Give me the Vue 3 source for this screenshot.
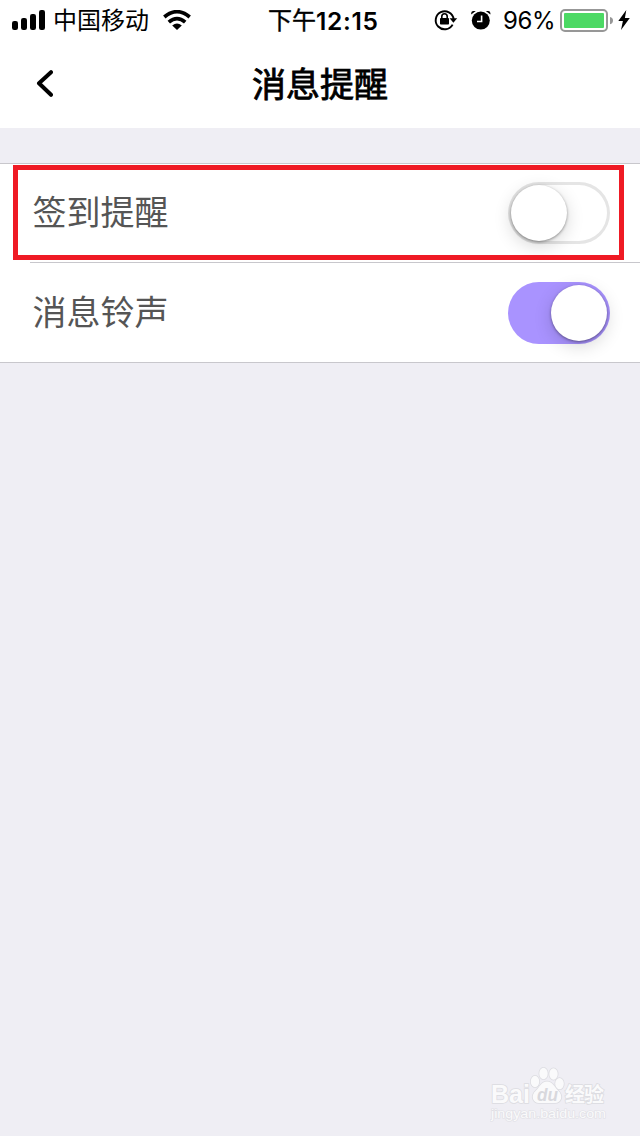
<script setup>
import { ref } from 'vue'

const rows = ref([
  { label: '签到提醒', on: false, marked: true },
  { label: '消息铃声', on: true, marked: false }
])
</script>

<template>
  <main class="screen">
    <header class="top">
      <div class="status">
        <div class="side left">
          <svg class="signal" width="33" height="20" viewBox="0 0 33 20">
            <rect x="0" y="11" width="6" height="9" rx="2.2" />
            <rect x="9" y="8" width="6" height="12" rx="2.2" />
            <rect x="18" y="4" width="6" height="16" rx="2.2" />
            <rect x="27" y="0" width="6" height="20" rx="2.2" />
          </svg>
          <span class="carrier">中国移动</span>
          <svg class="wifi" width="28" height="20" viewBox="0 0 28 20">
            <g fill="none" stroke="#000" stroke-width="3.7">
              <path d="M1.3 7 Q14 -3.6 26.7 7" />
              <path d="M5.8 12.2 Q14 5 22.2 12.2" />
            </g>
            <path d="M9.2 15.6 Q14 11.6 18.8 15.6 L14 20 Z" />
          </svg>
        </div>
        <div class="time"><span class="cjk">下午</span><span class="clock">12:15</span></div>
        <div class="side right">
          <svg class="lock" width="24" height="22" viewBox="0 0 24 22">
            <path d="M18.6 15.6 A9 9 0 1 1 19.6 10" fill="none" stroke="#000" stroke-width="1.9" />
            <path d="M15.6 9.2 H23.2 L19.4 13.8 Z" />
            <rect x="6" y="9" width="9" height="6.6" rx="0.8" />
            <path d="M7.8 9.5 V7.4 A2.7 2.7 0 0 1 13.2 7.4 V9.5" fill="none" stroke="#000" stroke-width="1.6" />
          </svg>
          <svg class="alarm" width="20" height="20" viewBox="0 0 20 20">
            <circle cx="9.8" cy="10.6" r="9" />
            <path d="M0.2 4.4 V3 Q0.4 1 2.4 0.9 H4.8 Z M19.4 4.4 V3 Q19.2 1 17.2 0.9 H14.8 Z" />
            <path d="M10.6 5.4 V11.5 H6" fill="none" stroke="#fff" stroke-width="1.6" />
          </svg>
          <span class="percent">96%</span>
          <svg class="battery" width="54" height="24" viewBox="0 0 54 24">
            <rect x="1" y="1" width="46" height="21" rx="4" fill="#fff" stroke="#979797" stroke-width="2" />
            <rect x="4" y="4" width="40" height="15" rx="1" fill="#4cd964" />
            <path d="M50 8 Q53 8.6 53 11.5 Q53 14.4 50 15.3 Z" fill="#979797" />
          </svg>
          <svg class="bolt" width="12" height="20" viewBox="0 0 12 20">
            <path d="M8.3 0 L0.3 11 H4.9 L3 20 L11.8 8 H6.9 Z" />
          </svg>
        </div>
      </div>
      <nav class="nav">
        <svg class="back" width="17" height="27" viewBox="0 0 17 27">
          <path d="M15 2.2 L3 13.3 L15 24.8" fill="none" stroke="#000" stroke-width="4" stroke-linecap="round" stroke-linejoin="round" />
        </svg>
        <h1 class="title">消息提醒</h1>
      </nav>
    </header>

    <section class="list">
      <div v-for="row in rows" :key="row.label" class="row">
        <span class="label">{{ row.label }}</span>
        <button class="switch" :class="{ on: row.on }" role="switch" :aria-checked="row.on" @click="row.on = !row.on">
          <span class="knob"></span>
        </button>
        <i v-if="row.marked" class="mark"></i>
      </div>
    </section>

    <footer class="watermark">
      <svg width="122" height="58" viewBox="0 0 122 58">
        <g class="ink">
          <text x="1" y="38" font-size="26" font-weight="700" textLength="39" lengthAdjust="spacingAndGlyphs">Bai</text>
          <ellipse cx="45" cy="16.5" rx="4.2" ry="5.7" />
          <ellipse cx="53.5" cy="8.5" rx="4.2" ry="5.8" />
          <ellipse cx="63.5" cy="9" rx="4.2" ry="5.8" />
          <ellipse cx="69.5" cy="18.7" rx="4.3" ry="5.6" />
          <path d="M57 16.5 C63 16.5 64 22 68 25.5 C74 31 71 38 65 38 H49 C43 38 40 31 46 25.5 C50 22 51 16.5 57 16.5 Z" />
          <text class="cjk" x="75" y="37" font-size="20" font-weight="700" textLength="39">经验</text>
        </g>
        <text class="du" x="47" y="35.5" textLength="21" lengthAdjust="spacingAndGlyphs">du</text>
        <text class="site" x="1" y="53" textLength="115" lengthAdjust="spacingAndGlyphs">jingyan.baidu.com</text>
      </svg>
    </footer>
  </main>
</template>

<style>
body {
  background: #efeef4;
}
</style>

<style scoped>
.screen {
  height: 1136px;
  display: flex;
  flex-direction: column;
  overflow: hidden;
  background: #efeef4;
  color: #000;
  font-family: Inter, "Noto Sans CJK SC", sans-serif;
}
svg {
  display: block;
  flex: none;
}
.top {
  height: 128px;
  background: #fff;
}
.status {
  height: 40px;
  display: grid;
  grid-template-columns: 240px 168px 1fr;
  align-items: center;
  white-space: nowrap;
}
.side {
  display: flex;
  align-items: center;
}
.left {
  padding-left: 12px;
}
.carrier {
  width: 96px;
  margin-left: 8px;
  padding-top: 2px;
  font-size: 24px;
  line-height: 38px;
}
.wifi {
  margin-left: 14px;
}
.time {
  display: flex;
  align-items: center;
  padding: 2px 0 0 28px;
  font-size: 24px;
  line-height: 38px;
}
.time .cjk {
  -webkit-text-stroke: 0.4px #000;
}
.clock {
  font-size: 24.5px;
  font-weight: 600;
  letter-spacing: 0.7px;
}
.right {
  padding-left: 26px;
}
.alarm {
  margin-left: 13px;
}
.percent {
  width: 57px;
  margin-left: 12px;
  padding-top: 2px;
  font-size: 24px;
  letter-spacing: -0.4px;
  line-height: 38px;
}
.battery {
  margin-top: 1px;
}
.bolt {
  margin-left: 4px;
}
.nav {
  height: 88px;
  display: grid;
  grid-template-columns: 90px 1fr 90px;
  align-items: center;
}
.back {
  margin-left: 36px;
  margin-bottom: 2px;
}
.title {
  margin: 0;
  padding-top: 2px;
  text-align: center;
  font-size: 34px;
  line-height: 86px;
  font-weight: 400;
  -webkit-text-stroke: 0.8px #000;
}
.list {
  margin-top: 35px;
  background: #fff;
  border-top: 1px solid #c8c7cc;
  border-bottom: 1px solid #c8c7cc;
}
.row {
  position: relative;
  height: 98px;
  display: flex;
  align-items: center;
  justify-content: space-between;
  padding: 0 30px 0 32.5px;
}
.row + .row {
  height: 99px;
  padding-top: 1px;
  background: linear-gradient(#c8c7cc, #c8c7cc) 30px 0 / 100% 1px no-repeat;
}
.label {
  color: #555;
  font-size: 34px;
  line-height: 98px;
}
.switch {
  width: 102px;
  height: 62px;
  display: flex;
  padding: 3px;
  border: 0;
  border-radius: 31px;
  background: #fff;
  box-shadow: inset 0 0 0 3px #e5e5e5;
}
.switch.on {
  justify-content: flex-end;
  background: #a993ff;
  box-shadow: none;
}
.knob {
  width: 56px;
  height: 56px;
  border-radius: 50%;
  background: #fff;
  box-shadow: 0 1px 3px rgba(0, 0, 0, 0.4), 0 5px 18px rgba(0, 0, 0, 0.16);
}
.mark {
  position: absolute;
  inset: 1px 16px 2px 13px;
  border: 5px solid #ef1a24;
}
.watermark {
  margin-top: auto;
  align-self: flex-end;
  margin-right: 28px;
  margin-bottom: 13px;
}
.ink {
  fill: #fafafb;
  stroke: #dcdce1;
  stroke-width: 1.6px;
  paint-order: stroke;
  font-family: "Liberation Sans", sans-serif;
}
.ink .cjk {
  font-family: "Noto Sans CJK SC", sans-serif;
}
.du {
  fill: #d8d8dd;
  font: italic 700 18px "Liberation Sans", sans-serif;
}
.site {
  fill: #fafafb;
  stroke: #e0e0e5;
  stroke-width: 1.2px;
  paint-order: stroke;
  font: 13px "Liberation Sans", sans-serif;
}
</style>
